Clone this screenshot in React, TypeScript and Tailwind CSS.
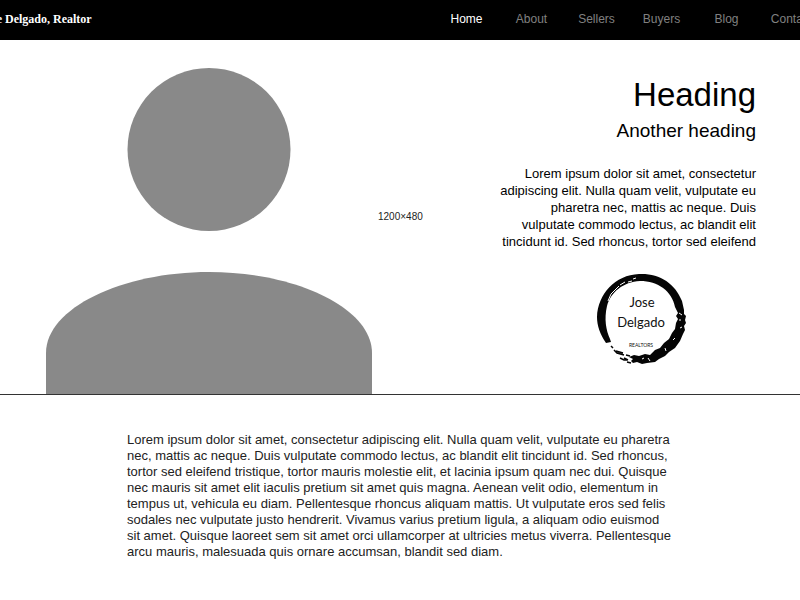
const navItems = ["Home", "About", "Sellers", "Buyers", "Blog", "Contact"];

function Portrait() {
  return (
    <svg viewBox="0 0 326 326" className="block w-full" fill="#898989" role="img" aria-label="Portrait placeholder">
      <circle cx="163" cy="81.5" r="81.5" />
      <path d="M0 326V285C0 240 76 204 163 204S326 240 326 285V326Z" />
    </svg>
  );
}

function Logo() {
  return (
    <svg viewBox="0 0 92 92" className="block h-[92px] w-[92px]" role="img" aria-label="Jose Delgado Realtors logo">
      <path
        d="M10 71C4 62 1 54 1 45C2 22 19 3 43 2C63 1 79 11 86 29L88 38L88 42L90 44L89 48L90 51L88 54L89 58L87 62L84 69L79 76L73 80L69 84L63 87L59 90L51 91L46 92L41 90L37 91L35 89L37 87L33 85L38 83L43 84L49 82L54 83L59 78L64 76L68 71L73 67L76 61L79 57L80 51L82 47L80 44L82 41L79 35C76 19 62 9 44 9C27 10 15 20 11 34C8 47 10 58 14 67L15 70Z"
        fill="#050505"
      />
      <path
        d="M12 29L15 22L23 14M24 13L29 10M32 10L36 9M37 7L40 6M83 41L86 43M83 48L85 48M84 56L86 55M77 68L79 66M69 76L70 79M52 86L54 89M46 87L48 86"
        fill="none"
        stroke="#ffffff"
        strokeWidth="1"
      />
      <path
        d="M15 74L17 76M18 78L21 81L28 83M20 79L27 81M24 86L28 88L31 88M28 86L32 88M30 83L34 84M31 90L35 91M68 75L71 73"
        fill="none"
        stroke="#050505"
        strokeWidth="1.5"
      />
      <g fill="#111111" textAnchor="middle" className="font-[Lato,sans-serif]">
        <text x="46" y="35" className="text-[13px]">
          Jose
        </text>
        <text x="45" y="55" className="text-[13px]">
          Delgado
        </text>
        <text x="45" y="75" className="text-[5px]">
          REALTORS
        </text>
      </g>
    </svg>
  );
}

export default function App() {
  return (
    <div className="min-h-screen overflow-x-hidden bg-white font-['Liberation_Sans',Arial,sans-serif] text-black">
      <header className="bg-black">
        <div className="-mx-6 flex h-10 items-center justify-between pb-[2px] pl-1">
          <a href="#home" className="font-['Liberation_Serif',serif] text-[12px] leading-4 font-bold whitespace-nowrap text-white">
            Jose Delgado, Realtor
          </a>
          <nav className="flex">
            {navItems.map((item, index) => (
              <a
                key={item}
                href={`#${item.toLowerCase()}`}
                className={`w-[65px] text-center text-[12px] leading-4 ${index === 0 ? "text-white" : "text-[#808080]"}`}
              >
                {item}
              </a>
            ))}
          </nav>
        </div>
      </header>

      <main>
        <section className="flex items-stretch justify-between border-b border-[#333333] pr-11 pl-[46px]">
          <div className="flex items-center gap-[6px]">
            <div className="w-[326px] self-end">
              <Portrait />
            </div>
            <span className="text-[10px] leading-4 text-[#222222]">1200×480</span>
          </div>
          <div className="w-[258px] pt-[35px] pb-[30px] text-right">
            <h1 className="text-[33px] leading-10">Heading</h1>
            <h2 className="mt-[2px] text-[19px] leading-7">Another heading</h2>
            <p className="mt-5 text-[13px] leading-[17px]">
              Lorem ipsum dolor sit amet, consectetur adipiscing elit. Nulla quam velit, vulputate eu pharetra nec, mattis
              ac neque. Duis vulputate commodo lectus, ac blandit elit tincidunt id. Sed rhoncus, tortor sed eleifend
            </p>
            <div className="mt-[22px] flex justify-end pr-[68px]">
              <Logo />
            </div>
          </div>
        </section>

        <section className="mx-auto w-full max-w-[546px] pt-[37px] pb-10">
          <p className="text-[13px] leading-4 text-[#222222]">
            Lorem ipsum dolor sit amet, consectetur adipiscing elit. Nulla quam velit, vulputate eu pharetra nec, mattis ac
            neque. Duis vulputate commodo lectus, ac blandit elit tincidunt id. Sed rhoncus, tortor sed eleifend tristique,
            tortor mauris molestie elit, et lacinia ipsum quam nec dui. Quisque nec mauris sit amet elit iaculis pretium sit
            amet quis magna. Aenean velit odio, elementum in tempus ut, vehicula eu diam. Pellentesque rhoncus aliquam
            mattis. Ut vulputate eros sed felis sodales nec vulputate justo hendrerit. Vivamus varius pretium ligula, a
            aliquam odio euismod sit amet. Quisque laoreet sem sit amet orci ullamcorper at ultricies metus viverra.
            Pellentesque arcu mauris, malesuada quis ornare accumsan, blandit sed diam.
          </p>
        </section>
      </main>
    </div>
  );
}
